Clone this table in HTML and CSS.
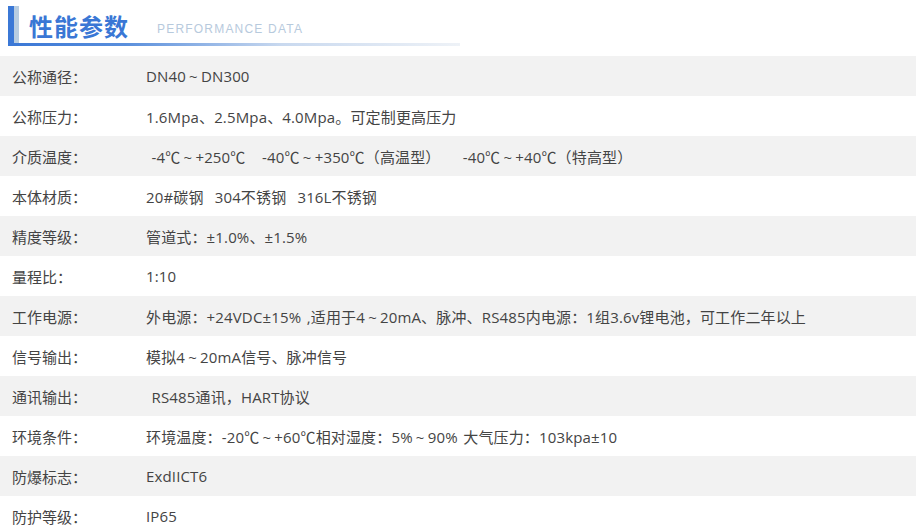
FILE: index.html
```html
<!DOCTYPE html>
<html lang="zh-CN">
<head>
<meta charset="utf-8">
<title>性能参数</title>
<link rel="stylesheet" href="styles.css">
</head>
<body>
<div class="heading">
  <div class="heading-body">
    <h2 class="title">性能参数</h2>
    <span class="subtitle">PERFORMANCE DATA</span>
  </div>
</div>
<div class="spec">
  <div class="row"><div class="label">公称通径：</div><div class="value">DN40<span class="t">~</span>DN300</div></div>
  <div class="row"><div class="label">公称压力：</div><div class="value">1.6Mpa、2.5Mpa、4.0Mpa。可定制更高压力</div></div>
  <div class="row"><div class="label">介质温度：</div><div class="value">&nbsp;-4℃<span class="t">~</span>+250℃&nbsp;&nbsp;&nbsp;-40℃<span class="t">~</span>+350℃（高温型）&nbsp;&nbsp;&nbsp;&nbsp;-40℃<span class="t">~</span>+40℃（特高型）</div></div>
  <div class="row"><div class="label">本体材质：</div><div class="value">20#碳钢&nbsp;&nbsp;304不锈钢&nbsp;&nbsp;316L不锈钢</div></div>
  <div class="row"><div class="label">精度等级：</div><div class="value">管道式：±1.0%、±1.5%</div></div>
  <div class="row"><div class="label">量程比：</div><div class="value">1:10</div></div>
  <div class="row"><div class="label">工作电源：</div><div class="value">外电源：+24VDC±15% ,适用于4<span class="t">~</span>20mA、脉冲、RS485内电源：1组3.6v锂电池，可工作二年以上</div></div>
  <div class="row"><div class="label">信号输出：</div><div class="value">模拟4<span class="t">~</span>20mA信号、脉冲信号</div></div>
  <div class="row"><div class="label">通讯输出：</div><div class="value">&nbsp;RS485通讯，HART协议</div></div>
  <div class="row"><div class="label">环境条件：</div><div class="value">环境温度：-20℃<span class="t">~</span>+60℃相对湿度：5%<span class="t">~</span>90% 大气压力：103kpa±10</div></div>
  <div class="row"><div class="label">防爆标志：</div><div class="value">ExdIICT6</div></div>
  <div class="row"><div class="label">防护等级：</div><div class="value">IP65</div></div>
</div>
</body>
</html>
```
FILE: styles.css
```css
html, body {
  margin: 0;
  padding: 0;
  background: #fff;
}
body {
  font-family: "Open Sans", "Noto Sans CJK SC", sans-serif;
  color: #444;
  overflow: hidden;
}
.heading {
  margin: 6px 0 0 8px;
  width: 446px;
  height: 40px;
  border-left: 6px solid #3b78d6;
  display: flex;
  background: linear-gradient(90deg, #3b78d6 0%, #5a8fdc 25%, #c9d9ef 60%, #eef2f7 100%) bottom / 100% 3px no-repeat;
}
.heading-body {
  height: 37px;
  border-left: 5px solid #b8cde1;
  display: flex;
  align-items: center;
  padding-left: 10px;
  gap: 28px;
}
.title {
  margin: 0;
  font-family: "Noto Sans CJK SC", sans-serif;
  font-size: 24px;
  font-weight: 700;
  letter-spacing: 1px;
  color: #3a77d5;
  line-height: 1;
  padding-top: 2px;
}
.subtitle {
  font-family: "Liberation Sans", Arial, sans-serif;
  font-size: 12px;
  letter-spacing: 1.2px;
  color: #b7cadd;
  padding-top: 9px;
}
.spec {
  margin-top: 10px;
}
.row {
  display: flex;
  height: 40px;
  align-items: center;
  font-size: 15px;
}
.row:nth-child(odd) {
  background: #f2f2f2;
}
.label {
  width: 134px;
  padding-left: 12px;
  flex: none;
}
.value {
  white-space: nowrap;
  letter-spacing: 0.15px;
  word-spacing: 1.5px;
}
.t {
  display: inline-block;
  width: 15px;
  text-align: center;
}
```
